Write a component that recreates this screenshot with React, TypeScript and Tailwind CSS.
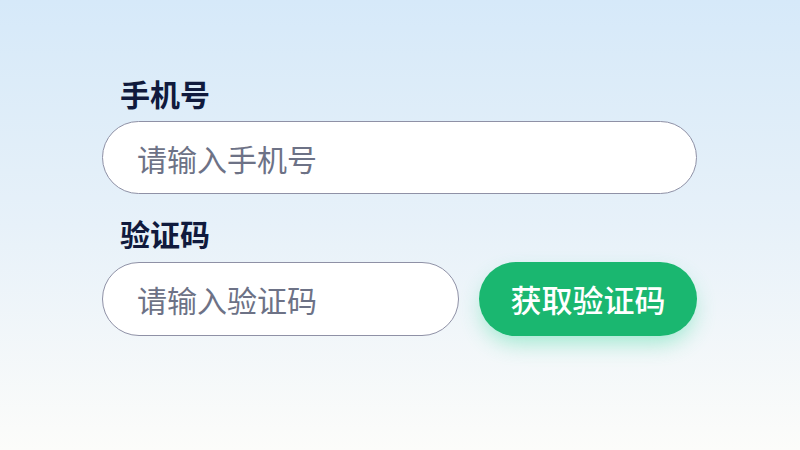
import { useState } from "react";

const font = { fontFamily: '"Noto Sans CJK SC", "Noto Sans", sans-serif' };

export default function App() {
    const [phone, setPhone] = useState("");
    const [code, setCode] = useState("");

    return (
        <div
            className="w-[800px] h-[450px] overflow-hidden bg-gradient-to-b from-[#d6e9f9] via-[#e7f1f9] to-[#fcfcfa]"
            style={font}
        >
            <div className="pl-[102px] pt-[75px] w-[697px] flex flex-col">
                {/* Phone */}
                <label className="pl-[18px] h-[36px] leading-[36px] text-[30px] font-bold text-[#101a3d]">
                    手机号
                </label>
                <input
                    value={phone}
                    onChange={(e) => setPhone(e.target.value)}
                    placeholder="请输入手机号"
                    className="mt-[10px] h-[73px] w-full rounded-full bg-white border border-[#8f91a6] pl-[34px] text-[30px] text-[#1f2937] placeholder:text-[#6d7286] outline-none"
                />

                {/* Code */}
                <label className="mt-[21px] pl-[18px] h-[36px] leading-[36px] text-[30px] font-bold text-[#101a3d]">
                    验证码
                </label>
                <div className="mt-[11px] flex gap-[20px]">
                    <input
                        value={code}
                        onChange={(e) => setCode(e.target.value)}
                        placeholder="请输入验证码"
                        className="h-[74px] w-[357px] rounded-full bg-white border border-[#8f91a6] pl-[34px] text-[30px] text-[#1f2937] placeholder:text-[#6d7286] outline-none"
                    />
                    <button className="h-[74px] flex-1 rounded-full bg-[#1ab770] text-white text-[31px] font-medium shadow-[0_10px_22px_-4px_rgba(46,214,150,0.45)]">
                        获取验证码
                    </button>
                </div>
            </div>
        </div>
    );
}
